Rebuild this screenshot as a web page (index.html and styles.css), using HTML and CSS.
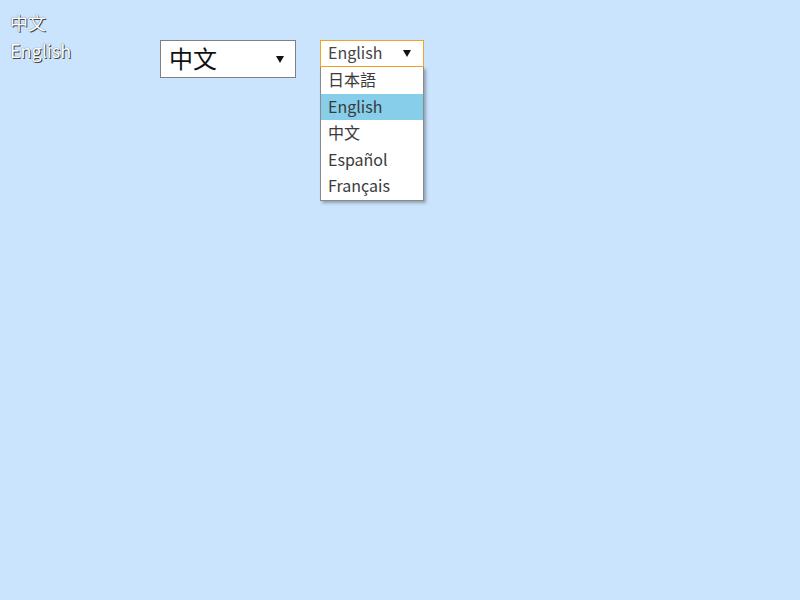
FILE: index.html
```html
<!DOCTYPE html>
<html lang="zh">
<head>
<meta charset="utf-8">
<title>Language select</title>
<link rel="stylesheet" href="styles.css">
</head>
<body>
<div class="page">
  <div class="labels">
    <div class="label">中文</div>
    <div class="label">English</div>
  </div>
  <div class="select select-big">
    <span class="select-text">中文</span>
    <svg class="arrow" width="8" height="7" viewBox="0 0 8 7"><polygon points="0,0 8,0 4,7" fill="#111"/></svg>
  </div>
  <div class="dropdown">
    <div class="select select-small">
      <span class="select-text">English</span>
      <svg class="arrow" width="8" height="7" viewBox="0 0 8 7"><polygon points="0,0 8,0 4,7" fill="#111"/></svg>
    </div>
    <ul class="options">
      <li class="option">日本語</li>
      <li class="option selected">English</li>
      <li class="option">中文</li>
      <li class="option">Español</li>
      <li class="option">Français</li>
    </ul>
  </div>
</div>
</body>
</html>
```
FILE: styles.css
```css
html, body {
  margin: 0;
  padding: 0;
  background: #cae4fd;
  font-family: "Noto Sans CJK JP", "Noto Sans", sans-serif;
}
body {
  min-height: 100vh;
}
.page {
  display: flex;
  align-items: flex-start;
  padding: 8px 10px;
}
.labels {
  width: 150px;
  display: flex;
  flex-direction: column;
}
.label {
  font-size: 18px;
  line-height: 28px;
  color: #ffffff;
  text-shadow: 1px 1px 0 #444, 0 0 1px #555;
}
.select {
  box-sizing: border-box;
  display: flex;
  align-items: center;
  justify-content: space-between;
  background: #ffffff;
}
.select-big {
  margin-top: 32px;
  width: 136px;
  height: 38px;
  border: 1px solid #808080;
  padding: 0 11px 3px 8px;
}
.select-big .select-text {
  font-size: 24px;
  line-height: 30px;
  color: #111;
}
.select-big .arrow {
  margin-top: 3px;
}
.dropdown {
  display: flex;
  flex-direction: column;
  margin-top: 32px;
  margin-left: 24px;
  width: 104px;
}
.select-small {
  width: 104px;
  height: 27px;
  border: 1px solid #f2a41e;
  padding: 0 12px 3px 7px;
}
.select-small .select-text {
  font-size: 16px;
  line-height: 20px;
  color: #444;
}
.select-small .arrow {
  margin-top: 3px;
}
.options {
  box-sizing: border-box;
  width: 104px;
  margin: 0;
  padding: 0;
  list-style: none;
  background: #ffffff;
  border: 1px solid #8a8a8a;
  border-top: none;
  box-shadow: 2px 2px 3px rgba(0, 0, 0, 0.3);
}
.option {
  height: 26.6px;
  line-height: 25px;
  padding-left: 7px;
  font-size: 16px;
  color: #3a3a3a;
}
.option.selected {
  background: #87ceeb;
}
```
